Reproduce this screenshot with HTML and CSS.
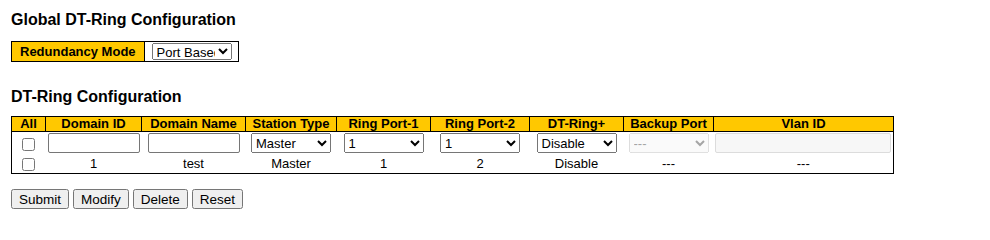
FILE: index.html
```html
<!DOCTYPE html>
<html>
<head>
<meta charset="utf-8">
<link rel="stylesheet" href="styles.css">
</head>
<body>
<h1 class="title">Global DT-Ring Configuration</h1>
<table class="mode-table">
  <tr>
    <th class="mode-label">Redundancy Mode</th>
    <td class="mode-cell">
      <select class="mode-select">
        <option>Port Based</option>
        <option>VLAN Based</option>
      </select>
    </td>
  </tr>
</table>

<h1 class="title title-second">DT-Ring Configuration</h1>
<table class="ring-table">
  <colgroup>
    <col class="c-all"><col class="c-id"><col class="c-name"><col class="c-st">
    <col class="c-p1"><col class="c-p2"><col class="c-dt"><col class="c-bp"><col class="c-vlan">
  </colgroup>
  <tr class="head">
    <th>All</th>
    <th>Domain ID</th>
    <th>Domain Name</th>
    <th>Station Type</th>
    <th>Ring Port-1</th>
    <th>Ring Port-2</th>
    <th>DT-Ring+</th>
    <th>Backup Port</th>
    <th>Vlan ID</th>
  </tr>
  <tr class="edit-row">
    <td><input type="checkbox" class="chk"></td>
    <td><input type="text" class="txt"></td>
    <td><input type="text" class="txt"></td>
    <td><select class="sel"><option>Master</option><option>Slave</option></select></td>
    <td><select class="sel"><option>1</option><option>2</option></select></td>
    <td><select class="sel"><option>1</option><option>2</option></select></td>
    <td><select class="sel"><option>Disable</option><option>Enable</option></select></td>
    <td><select class="sel" disabled><option>---</option></select></td>
    <td><input type="text" class="txt-vlan" disabled></td>
  </tr>
  <tr class="data-row">
    <td><input type="checkbox" class="chk"></td>
    <td>1</td>
    <td>test</td>
    <td>Master</td>
    <td>1</td>
    <td>2</td>
    <td>Disable</td>
    <td>---</td>
    <td>---</td>
  </tr>
</table>

<div class="buttons">
  <button class="btn">Submit</button>
  <button class="btn">Modify</button>
  <button class="btn">Delete</button>
  <button class="btn">Reset</button>
</div>
</body>
</html>
```

FILE: styles.css
```css
body {
  margin: 0;
  padding: 11px 11px 0 11px;
  font-family: "Liberation Sans", Arial, sans-serif;
  font-size: 13px;
  color: #000;
  background: #fff;
}

.title {
  font-size: 16px;
  font-weight: bold;
  line-height: 18px;
  margin: 0 0 12px 0;
}

.title-second {
  margin-top: 26px;
  margin-bottom: 10px;
}

.mode-table {
  border-collapse: collapse;
  border: 1px solid #000;
}

.mode-label {
  background: #ffc800;
  font-weight: bold;
  font-size: 13px;
  padding: 0 8px 0 8px;
  height: 19px;
  border-right: 1px solid #000;
  white-space: nowrap;
}

.mode-cell {
  padding: 0 6px 0 7px;
}

.mode-select {
  width: 80px;
  height: 17px;
  font-family: "Liberation Sans", Arial, sans-serif;
  font-size: 13px;
  padding: 0;
  margin: 0;
  display: block;
}

.ring-table {
  border-collapse: collapse;
  border: 1px solid #000;
  table-layout: fixed;
  width: 882px;
}

.c-all { width: 34px; }
.c-id { width: 96px; }
.c-name { width: 104px; }
.c-st { width: 91px; }
.c-p1 { width: 94px; }
.c-p2 { width: 99px; }
.c-dt { width: 94px; }
.c-bp { width: 90px; }
.c-vlan { width: 180px; }

.head th {
  background: #ffc800;
  font-weight: bold;
  font-size: 13px;
  line-height: 14px;
  height: 14px;
  padding: 0;
  border: 1px solid #000;
  white-space: nowrap;
  text-align: center;
}

.edit-row td {
  height: 22px;
  padding: 0;
  text-align: center;
}

.data-row td {
  height: 19px;
  padding: 0;
  text-align: center;
  vertical-align: middle;
}

.chk {
  margin: 0;
  width: 13px;
  height: 13px;
  vertical-align: middle;
}

.txt {
  width: 92px;
  height: 20px;
  box-sizing: border-box;
  border: 1px solid #767676;
  border-radius: 2px;
  margin: 0;
  padding: 1px 2px;
  vertical-align: middle;
  font-family: "Liberation Sans", Arial, sans-serif;
  font-size: 13px;
}

.txt-vlan {
  width: 176px;
  height: 20px;
  box-sizing: border-box;
  border: 1px solid #dcdcdc;
  background: #f7f7f7;
  border-radius: 2px;
  margin: 0;
  vertical-align: middle;
}

.sel {
  width: 80px;
  height: 20px;
  box-sizing: border-box;
  margin: 0;
  vertical-align: middle;
  font-family: "Liberation Sans", Arial, sans-serif;
  font-size: 13px;
}

.buttons {
  margin-top: 15px;
  display: flex;
  gap: 4px;
}

.btn {
  font-family: "Liberation Sans", Arial, sans-serif;
  font-size: 13.5px;
  height: 20px;
  padding: 0 6px;
  margin: 0;
}
```
